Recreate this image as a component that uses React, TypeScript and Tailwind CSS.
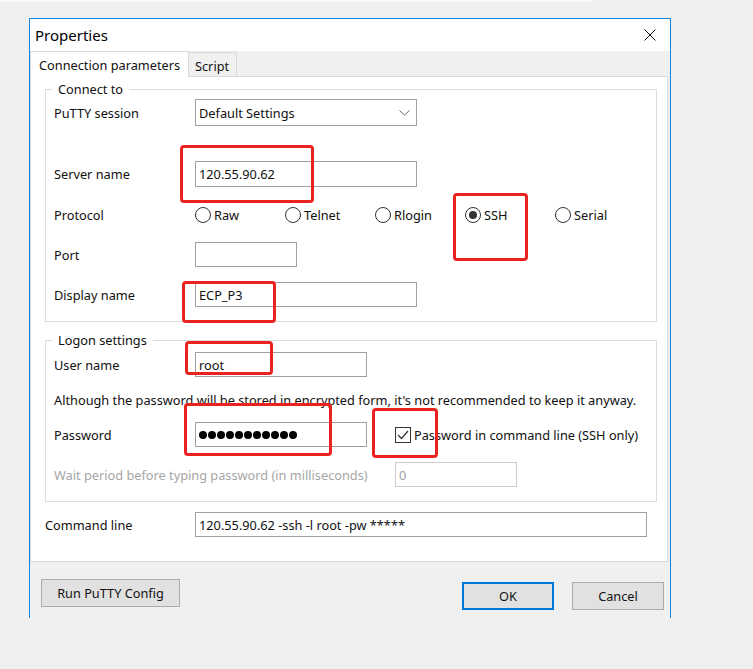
import React from "react";

const FONT = "font-['Noto_Sans','Open_Sans','DejaVu_Sans',sans-serif]";

function TextBox({
  value,
  width,
  height = 25,
  disabled = false,
  children,
}: {
  value?: string;
  width: number;
  height?: number;
  disabled?: boolean;
  children?: React.ReactNode;
}) {
  return (
    <div
      className={
        "flex items-center bg-white pl-[3px] text-[12.75px] leading-[16px] border " +
        (disabled ? "border-[#cccccc] text-[#a0a0a0]" : "border-[#a0a0a0] text-[#111]")
      }
      style={{ width, height }}
    >
      {children ?? value}
    </div>
  );
}

function Radio({ label, checked = false }: { label: string; checked?: boolean }) {
  return (
    <div className="flex w-[90px] items-center gap-[3px]">
      <span className="flex h-[16px] w-[16px] items-center justify-center rounded-full border border-[#333] bg-white">
        {checked && <span className="h-[8px] w-[8px] rounded-full bg-[#333]" />}
      </span>
      <span>{label}</span>
    </div>
  );
}

function Group({ title, children }: { title: string; children: React.ReactNode }) {
  return (
    <fieldset className="border border-[#dcdcdc]">
      <legend className="ml-[6px] px-[6px] text-[12.75px] leading-[16px] text-[#111]">{title}</legend>
      <div className="pl-[8px] pb-[14px]">{children}</div>
    </fieldset>
  );
}

const redBox = "pointer-events-none absolute rounded-[4px] border-[3px] border-[#ea2320]";

export default function App() {
  return (
    <div className={"relative h-[669px] w-[753px] overflow-hidden bg-[#efefef] text-[12.75px] leading-[16px] text-[#111] " + FONT}>
      <div className="h-[2px] w-[593px] bg-[#f8f8f8]" />

      <div className="ml-[29px] mt-[16px] flex h-[600px] w-[642px] flex-col border-x border-t border-[#1883d7] bg-[#f0f0f0]">
        {/* title bar */}
        <div className="flex h-[32px] items-center justify-between bg-white pl-[5px] pr-[14px]">
          <span className="text-[15px] leading-[18px] text-black">Properties</span>
          <svg width="12" height="12" viewBox="0 0 12 12">
            <path d="M0.5 0.5 L11.5 11.5 M11.5 0.5 L0.5 11.5" stroke="#111" strokeWidth="1" />
          </svg>
        </div>

        {/* tabs */}
        <div className="relative z-10 -mb-px flex h-[26px] items-end">
          <div className="flex h-[26px] w-[159px] items-center border border-b-0 border-[#d9d9d9] bg-white pl-[8px]">
            Connection parameters
          </div>
          <div className="mb-px flex h-[24px] w-[48px] items-center border border-b-0 border-l-0 border-[#d9d9d9] bg-[#f0f0f0] pl-[6px] pt-[2px]">
            Script
          </div>
        </div>

        {/* panel */}
        <div className="h-[486px] w-[638px] border border-[#d9d9d9] bg-white pl-[14px] pr-[10px] pt-[4px]">
          <Group title="Connect to">
            <div className="mt-[2px] flex h-[27px] items-center">
              <span className="w-[141px]">PuTTY session</span>
              <div className="flex h-[27px] w-[222px] items-center justify-between border border-[#a0a0a0] bg-white pl-[3px] pr-[6px]">
                <span>Default Settings</span>
                <svg width="11" height="6" viewBox="0 0 11 6">
                  <path d="M0.5 0.5 L5.5 5 L10.5 0.5" fill="none" stroke="#666" strokeWidth="1" />
                </svg>
              </div>
            </div>

            <div className="mt-[35px] flex h-[26px] items-center">
              <span className="w-[141px]">Server name</span>
              <TextBox value="120.55.90.62" width={222} height={26} />
            </div>

            <div className="mt-[18px] flex h-[20px] items-center">
              <span className="w-[141px]">Protocol</span>
              <Radio label="Raw" />
              <Radio label="Telnet" />
              <Radio label="Rlogin" />
              <Radio label="SSH" checked />
              <Radio label="Serial" />
            </div>

            <div className="mt-[17px] flex h-[25px] items-center">
              <span className="w-[141px]">Port</span>
              <TextBox width={102} />
            </div>

            <div className="mt-[15px] flex h-[25px] items-center">
              <span className="w-[141px]">Display name</span>
              <TextBox value="ECP_P3" width={222} />
            </div>
          </Group>

          <div className="mt-[10px]">
            <Group title="Logon settings">
              <div className="mt-[4px] flex h-[25px] items-center">
                <span className="w-[141px]">User name</span>
                <TextBox value="root" width={172} />
              </div>

              <div className="mt-[15px] h-[16px]">
                Although the password will be stored in encrypted form, it's not recommended to keep it anyway.
              </div>

              <div className="mt-[14px] flex h-[25px] items-center">
                <span className="w-[141px]">Password</span>
                <TextBox width={172}>
                  <div className="flex gap-[1px]">
                    {Array.from({ length: 11 }).map((_, i) => (
                      <span key={i} className="h-[8px] w-[8px] rounded-full bg-black" />
                    ))}
                  </div>
                </TextBox>
                <div className="ml-[28px] flex items-center gap-[3px]">
                  <span className="flex h-[16px] w-[16px] items-center justify-center border border-[#333] bg-white">
                    <svg width="12" height="10" viewBox="0 0 12 10">
                      <path d="M1 5 L4.5 8.5 L11 1" fill="none" stroke="#333" strokeWidth="1.2" />
                    </svg>
                  </span>
                  <span>Password in command line (SSH only)</span>
                </div>
              </div>

              <div className="mt-[15px] flex h-[25px] items-center">
                <span className="w-[341px] text-[#a6a6a6]">Wait period before typing password (in milliseconds)</span>
                <TextBox value="0" width={122} disabled />
              </div>
            </Group>
          </div>

          <div className="mt-[10px] flex h-[25px] items-center">
            <span className="w-[150px]">Command line</span>
            <TextBox value="120.55.90.62 -ssh -l root -pw *****" width={452} />
          </div>
        </div>

        {/* buttons */}
        <div className="flex items-start">
          <button className="ml-[11px] mt-[17px] h-[28px] w-[139px] border border-[#adadad] bg-[#e1e1e1] text-[12.75px] text-[#111]">
            Run PuTTY Config
          </button>
          <button className="ml-auto mt-[20px] h-[28px] w-[92px] border-2 border-[#0078d7] bg-[#e1e1e1] text-[12.75px] text-[#111]">
            OK
          </button>
          <button className="ml-[18px] mr-[6px] mt-[20px] h-[28px] w-[92px] border border-[#adadad] bg-[#e1e1e1] text-[12.75px] text-[#111]">
            Cancel
          </button>
        </div>
      </div>

      {/* red annotation boxes */}
      <div className={redBox + " left-[180px] top-[145px] h-[58px] w-[134px]"} />
      <div className={redBox + " left-[453px] top-[193px] h-[68px] w-[75px]"} />
      <div className={redBox + " left-[182px] top-[281px] h-[42px] w-[94px]"} />
      <div className={redBox + " left-[185px] top-[341px] h-[34px] w-[88px]"} />
      <div className={redBox + " left-[184px] top-[403px] h-[53px] w-[148px]"} />
      <div className={redBox + " left-[372px] top-[408px] h-[50px] w-[66px]"} />
    </div>
  );
}
